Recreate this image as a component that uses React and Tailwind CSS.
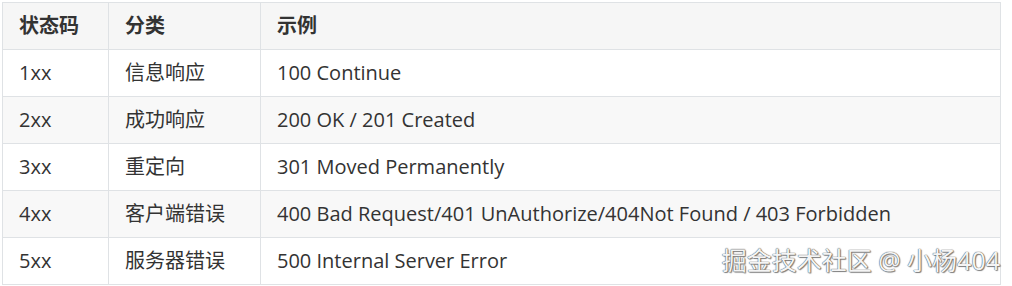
import React from "react";

const rows = [
  { code: "1xx", type: "信息响应", example: "100 Continue" },
  { code: "2xx", type: "成功响应", example: "200 OK / 201 Created" },
  { code: "3xx", type: "重定向", example: "301 Moved Permanently" },
  {
    code: "4xx",
    type: "客户端错误",
    example: "400 Bad Request/401 UnAuthorize/404Not Found / 403 Forbidden",
  },
  { code: "5xx", type: "服务器错误", example: "500 Internal Server Error" },
];

const App = () => {
  return (
    <div
      className="relative w-[1012px] h-[286px] bg-white pt-[2px] pl-[2px] overflow-hidden"
      style={{ fontFamily: "'Open Sans', 'Noto Sans CJK SC', sans-serif" }}
    >
      <table className="w-[999px] border-collapse text-[20px] text-[#333333] table-fixed">
        <colgroup>
          <col className="w-[106px]" />
          <col className="w-[152px]" />
          <col />
        </colgroup>
        <thead>
          <tr className="bg-[#f6f6f6]">
            <th className="h-[47px] border border-[#dfe2e5] px-4 text-left font-bold leading-[30px]">
              状态码
            </th>
            <th className="h-[47px] border border-[#dfe2e5] px-4 text-left font-bold leading-[30px]">
              分类
            </th>
            <th className="h-[47px] border border-[#dfe2e5] px-4 text-left font-bold leading-[30px]">
              示例
            </th>
          </tr>
        </thead>
        <tbody>
          {rows.map((row, i) => (
            <tr key={row.code} className={i % 2 === 1 ? "bg-[#f8f8f8]" : "bg-white"}>
              <td className="h-[47px] border border-[#dfe2e5] px-4 leading-[30px]">{row.code}</td>
              <td className="h-[47px] border border-[#dfe2e5] px-4 leading-[30px]">{row.type}</td>
              <td className="h-[47px] border border-[#dfe2e5] px-4 leading-[30px] whitespace-nowrap">
                {row.example}
              </td>
            </tr>
          ))}
        </tbody>
      </table>

      {/* watermark */}
      <div className="absolute right-[12px] top-[243px] text-[25px] leading-[34px] text-[#f4f4f4] whitespace-nowrap [text-shadow:0_0_1px_#555,0_0_1px_#555,1px_1px_1px_#888]">
        掘金技术社区 @ 小杨404
      </div>
    </div>
  );
};

export default App;
